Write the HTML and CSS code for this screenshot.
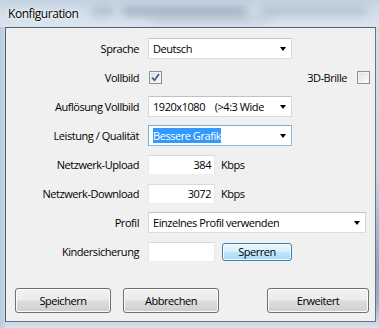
FILE: index.html
```html
<!DOCTYPE html>
<html lang="de">
<head>
<meta charset="utf-8">
<title>Konfiguration</title>
<link rel="stylesheet" href="styles.css">
</head>
<body>
<div class="window">
  <div class="titlebar">
    <span class="title">Konfiguration</span>
    <div class="glass" aria-hidden="true">
      <span class="smudge s1"></span><span class="smudge s2"></span><span class="smudge s3"></span><span class="smudge s4"></span>
    </div>
  </div>
  <div class="frame">
    <div class="client">
      <div class="form">
        <label class="lbl">Sprache</label>
        <div class="ctrl"><div class="combo"><span class="val">Deutsch</span><span class="arrow"></span></div></div>

        <label class="lbl">Vollbild</label>
        <div class="ctrl split">
          <span class="check on"><svg width="9" height="9" viewBox="0 0 9 9"><path d="M1 4.5 L3.5 7.2 L8 1" fill="none" stroke="#3b4f8c" stroke-width="1.6"/></svg></span>
          <span class="right"><span class="side">3D-Brille</span><span class="check"></span></span>
        </div>

        <label class="lbl">Auflösung Vollbild</label>
        <div class="ctrl"><div class="combo"><span class="val">1920x1080&nbsp;&nbsp;&nbsp;&nbsp;(&gt;4:3 Wide</span><span class="arrow"></span></div></div>

        <label class="lbl">Leistung / Qualität</label>
        <div class="ctrl"><div class="combo focus"><span class="val"><span class="sel">Bessere Grafik</span></span><span class="arrow"></span></div></div>

        <label class="lbl">Netzwerk-Upload</label>
        <div class="ctrl"><div class="edit num">384</div><span class="unit">Kbps</span></div>

        <label class="lbl">Netzwerk-Download</label>
        <div class="ctrl"><div class="edit num">3072</div><span class="unit">Kbps</span></div>

        <label class="lbl">Profil</label>
        <div class="ctrl"><div class="combo wide"><span class="val">Einzelnes Profil verwenden</span><span class="arrow"></span></div></div>

        <label class="lbl">Kindersicherung</label>
        <div class="ctrl"><div class="edit"></div><button class="btn hot small">Sperren</button></div>
      </div>
      <div class="buttons">
        <button class="btn">Speichern</button>
        <button class="btn">Abbrechen</button>
        <button class="btn big">Erweitert</button>
      </div>
    </div>
  </div>
</div>
</body>
</html>
```
FILE: styles.css
```css
* { box-sizing: border-box; }
html, body { margin: 0; padding: 0; }
body {
  width: 379px;
  height: 328px;
  overflow: hidden;
  font-family: "Open Sans", "Segoe UI", sans-serif;
  font-size: 11px;
  letter-spacing: -0.45px;
  color: #000;
}
.window {
  width: 379px;
  height: 328px;
  display: flex;
  flex-direction: column;
  background: linear-gradient(180deg, #c9d7e5 0%, #d6e1ec 20%, #dbe5ef 100%);
}
.titlebar {
  height: 27px;
  position: relative;
  display: flex;
  align-items: center;
  padding-left: 8px;
  background: linear-gradient(180deg, #c3d2e2 0%, #d3dfeb 55%, #dbe5ef 100%);
  overflow: hidden;
}
.title {
  position: relative;
  z-index: 2;
  font-size: 12px;
  letter-spacing: -0.45px;
  color: #000;
  text-shadow: 0 0 6px #fff, 0 0 3px #fff;
  margin-top: -1px;
}
.glass {
  position: absolute;
  inset: 0;
}
.smudge {
  position: absolute;
  top: 7px;
  height: 9px;
  background: rgba(110, 120, 135, 0.3);
  filter: blur(4px);
  border-radius: 4px;
}
.s1 { left: 92px; width: 22px; }
.s2 { left: 122px; width: 125px; background: rgba(95, 105, 120, 0.38); }
.s3 { left: 262px; width: 105px; background: rgba(115, 125, 140, 0.28); }
.s4 { left: 150px; width: 120px; top: 15px; background: rgba(130, 140, 150, 0.18); }
.frame {
  flex: 1;
  display: flex;
  padding: 0 3px 6px 5px;
  background: linear-gradient(90deg, #b8cadd 0px, #c8d6e4 5px, transparent 5px),
              linear-gradient(180deg, #d4dfea 0%, #c5d4e3 50%, #8aa6c4 80%, #9db3cb 92%, #d8e2ec 100%);
}
.client {
  flex: 1;
  display: flex;
  flex-direction: column;
  background: #f0f0f0;
  border: 1px solid #4b5663;
  border-color: #55606c #6a7480 #6a7480 #55606c;
}
.form {
  display: grid;
  grid-template-columns: 133px 1fr;
  grid-auto-rows: 21px;
  column-gap: 9px;
  row-gap: 8px;
  padding: 10px 5px 0 0;
}
.lbl {
  display: flex;
  align-items: center;
  justify-content: flex-end;
  white-space: nowrap;
}
.ctrl {
  display: flex;
  align-items: center;
  min-width: 0;
}
.split { justify-content: space-between; }
.right { display: flex; align-items: center; }
.side { margin-right: 9px; }
.combo {
  position: relative;
  width: 144px;
  height: 21px;
  background: #fff;
  border: 1px solid #c6c9cf;
  border-color: #bfc3c9 #d5d8dc #d9dce0 #d5d8dc;
  display: flex;
  align-items: center;
  padding: 0 14px 0 4px;
  overflow: hidden;
}
.combo.wide { width: 218px; }
.combo.focus { border-color: #7aaae0 #8bb7e8 #8bb7e8 #7aaae0; }
.val { white-space: nowrap; overflow: hidden; display: block; }
.sel { background: #3399ff; color: #fff; padding: 1px 0 2px; }
.arrow {
  position: absolute;
  right: 5px;
  top: 8px;
  width: 0;
  height: 0;
  border-left: 3.5px solid transparent;
  border-right: 3.5px solid transparent;
  border-top: 4px solid #000;
}
.check {
  width: 13px;
  height: 13px;
  border: 1px solid #8e8f8f;
  background: linear-gradient(135deg, #dcdcdc 0%, #f2f2f2 60%, #ffffff 100%);
  box-shadow: inset 0 0 0 1px #f4f4f4;
  display: flex;
  align-items: center;
  justify-content: center;
  margin-left: 1px;
}
.check.on { background: linear-gradient(135deg, #d6dbe6 0%, #eef0f5 60%, #fbfbfd 100%); }
.edit {
  width: 67px;
  height: 20px;
  background: #fff;
  border: 1px solid;
  border-color: #d7dade #e6e8eb #eceef0 #e6e8eb;
  display: flex;
  align-items: center;
  justify-content: flex-end;
  padding-right: 3px;
}
.unit { margin-left: 6px; }
.btn {
  font-family: inherit;
  font-size: 11px;
  letter-spacing: -0.45px;
  color: #000;
  height: 25px;
  width: 96px;
  border: 1px solid #707070;
  border-radius: 3px;
  background: linear-gradient(180deg, #f2f2f2 0%, #ebebeb 48%, #dddddd 52%, #cfcfcf 100%);
  box-shadow: inset 0 0 0 1px #fbfbfb;
  padding: 0;
  margin: 0;
}
.btn.big { width: 102px; }
.btn.small {
  width: 70px;
  height: 18px;
  margin-left: 7px;
  line-height: 14px;
}
.btn.hot {
  border-color: #3c7fb1;
  background: linear-gradient(180deg, #eaf6fd 0%, #d9f0fc 48%, #bee6fd 52%, #a7d9f5 100%);
  box-shadow: inset 0 0 0 1px #f6fbfe;
}
.buttons {
  margin-top: auto;
  display: flex;
  align-items: center;
  padding: 0 6px 8px 9px;
  gap: 12px;
}
.buttons .big { margin-left: auto; }
```
